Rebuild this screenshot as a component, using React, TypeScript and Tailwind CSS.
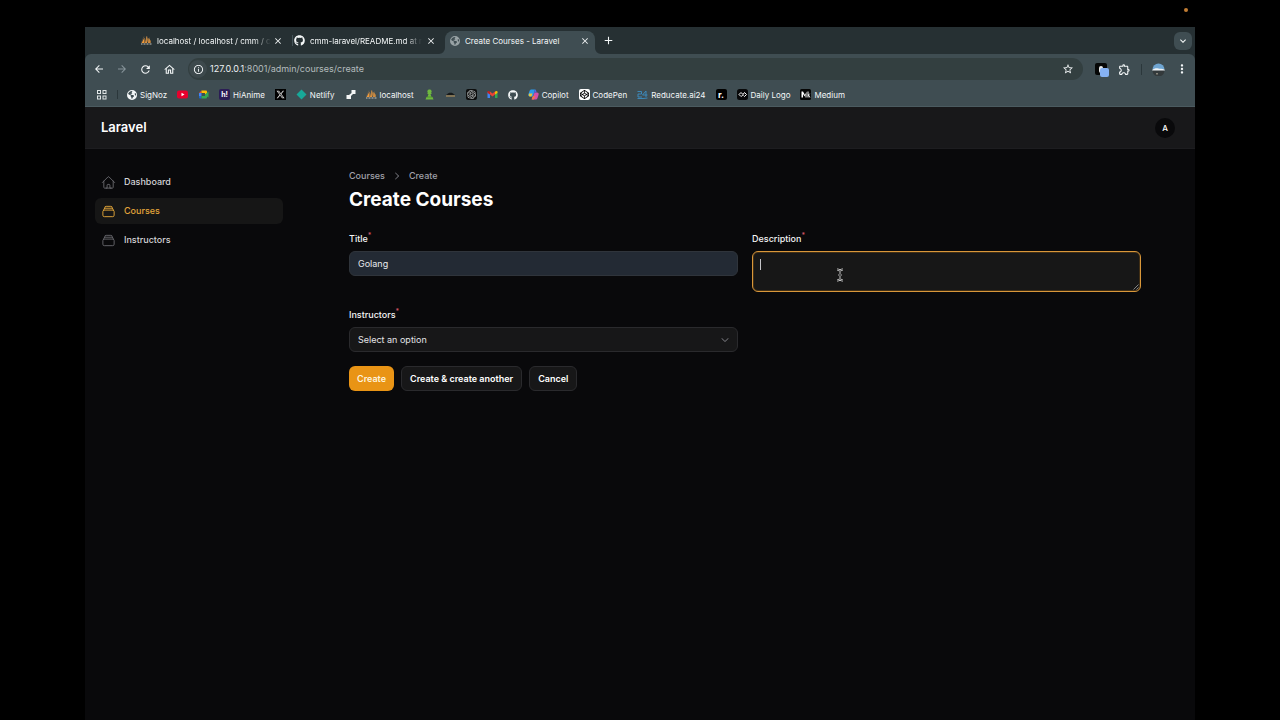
import type { ReactNode } from "react";
import {
  HiOutlineHome,
  HiOutlineRectangleStack,
  HiChevronRight,
  HiChevronDown,
} from "react-icons/hi2";
import {
  MdArrowBack,
  MdArrowForward,
  MdRefresh,
  MdOutlineHome,
  MdInfoOutline,
  MdStarBorder,
  MdOutlineExtension,
  MdClose,
  MdAdd,
  MdMoreVert,
  MdKeyboardArrowDown,
} from "react-icons/md";
import { FaGithub, FaXTwitter, FaCodepen, FaEarthAmericas } from "react-icons/fa6";
import { SiOpenai } from "react-icons/si";

const icon = "size-[11px] shrink-0";

function PhpMyAdmin() {
  return (
    <svg viewBox="0 0 22 20" className={icon} aria-hidden="true">
      <path d="M1 15 7 4v11zM8 15 11 1c3 4 3 10 1 14zM14 15l1-10c4 3 5 7 4 10z" fill="#f09a3a" />
      <path d="M6 2 1 14M12 1l-2 13M17 4l-1 11" stroke="#7c6a55" strokeWidth="1" />
      <path d="M0 17h22" stroke="#c8c6c0" strokeWidth="2" strokeDasharray="2 1" />
    </svg>
  );
}

function YouTube() {
  return (
    <svg viewBox="0 0 22 22" className={icon} aria-hidden="true">
      <rect x="0" y="3" width="22" height="16" rx="4" fill="#e6002d" />
      <path d="m9 7.500 6 3.500-6 3.500z" fill="#fff" />
    </svg>
  );
}

function Meet() {
  return (
    <svg viewBox="0 0 22 22" className={icon} aria-hidden="true">
      <path d="M2 8 7 3v5z" fill="#ea4335" />
      <path d="M7 3h9a2 2 0 0 1 2 2v4l-4 2V8H7z" fill="#fbbc04" />
      <path d="M2 8h5v7H2z" fill="#4285f4" />
      <path d="M2 15h5v4H4a2 2 0 0 1-2-2z" fill="#1967d2" />
      <path d="M7 14h7v-3l7-6v12l-3-2v2a2 2 0 0 1-2 2H7z" fill="#34a853" />
    </svg>
  );
}

function HiAnime() {
  return (
    <span className="flex size-[11px] shrink-0 items-center justify-center rounded-xs bg-[#2b1c55] text-[7px] font-bold leading-none text-white">
      h!
    </span>
  );
}

function XLogo() {
  return (
    <span className="flex size-[11px] shrink-0 items-center justify-center bg-black text-[#d6d6d6]">
      <FaXTwitter className="size-[9px]" />
    </span>
  );
}

function Netlify() {
  return (
    <svg viewBox="0 0 22 22" className={icon} aria-hidden="true">
      <path d="m11 1 10 10-10 10L1 11z" fill="#17a899" />
    </svg>
  );
}

function Steps() {
  return (
    <svg viewBox="0 0 22 22" className={icon} aria-hidden="true">
      <path d="M13 2h8v8h-5l-4 4v6H3v-8h5l5-4z" fill="#f4f6f6" />
    </svg>
  );
}

function Pawn() {
  return (
    <svg viewBox="0 0 22 22" className={icon} aria-hidden="true">
      <path d="M11 1a4 4 0 0 1 3 7h1v2h-2l2 6h2l2 5H3l2-5h2l2-6H7V8h1a4 4 0 0 1 3-7z" fill="#6fb83f" />
      <path d="M5 16h12" stroke="#4a8a2a" strokeWidth="1.500" />
    </svg>
  );
}

function Hat() {
  return (
    <svg viewBox="0 0 22 22" className={icon} aria-hidden="true">
      <path d="M4 11c2-5 12-5 14 0l3 1H1z" fill="#16191a" />
      <path d="M2 14h18" stroke="#c39b5a" strokeWidth="2" />
    </svg>
  );
}

function OpenAi() {
  return (
    <span className="flex size-[11px] shrink-0 items-center justify-center rounded-xs bg-[#0c0d0d] text-[#c9cccc]">
      <SiOpenai className="size-[9px]" />
    </span>
  );
}

function Gmail() {
  return (
    <svg viewBox="0 0 22 22" className={icon} aria-hidden="true">
      <path d="M1 6v11a1 1 0 0 0 1 1h4V9z" fill="#4285f4" />
      <path d="M21 6v11a1 1 0 0 1-1 1h-4V9z" fill="#34a853" />
      <path d="m6 5 5 4 5-4v6l-5 4-5-4z" fill="#ea4335" />
      <path d="M1 6c0-2 2-3 5-1v6L1 8z" fill="#c5221f" />
      <path d="M21 6c0-2-2-3-5-1v6l5-3z" fill="#fbbc04" />
    </svg>
  );
}

function Copilot() {
  return (
    <svg viewBox="0 0 22 22" className={icon} aria-hidden="true">
      <path d="M7 1h7l-4 14H4c-3 0-4-2-3-5l2-6c1-2 2-3 4-3z" fill="#2a9bea" />
      <path d="M2 9h7l-2 6H4c-3 0-3-3-2-6z" fill="#e8c338" />
      <path d="M13 7h5c3 0 4 2 3 5l-2 6c-1 2-2 3-4 3H8z" fill="#d44fa9" />
      <path d="M14 1c3 0 2 5 4 6h-5l-2 4z" fill="#5566e0" />
      <path d="m9 15-2 6h5l3-8z" fill="#f2744d" />
    </svg>
  );
}

function CodePen() {
  return (
    <span className="flex size-[11px] shrink-0 items-center justify-center rounded-xs bg-white text-black">
      <FaCodepen className="size-[9px]" />
    </span>
  );
}

function Reducate() {
  return (
    <svg viewBox="0 0 22 22" className={icon} aria-hidden="true">
      <path d="M1 5h8v5H2v6h8M18 16V4l-7 8h10M1 19h11l9-1" fill="none" stroke="#3c8fc4" strokeWidth="1.800" />
    </svg>
  );
}

function Roadmap() {
  return (
    <span className="flex size-[11px] shrink-0 items-center justify-center rounded-xs bg-black text-[9px] font-bold leading-none text-white">
      r.
    </span>
  );
}

function DailyLogo() {
  return (
    <svg viewBox="0 0 22 22" className={icon} aria-hidden="true">
      <rect width="22" height="22" rx="5" fill="#08090a" />
      <path d="m8 15-4-4 4-4 3 3M9 15l6-8 4 4-4 4-2-2" fill="none" stroke="#fff" strokeWidth="2" />
    </svg>
  );
}

function Medium() {
  return (
    <svg viewBox="0 0 22 22" className={icon} aria-hidden="true">
      <rect width="22" height="22" rx="3" fill="#050505" />
      <path d="M3 5h3l4 7 3-7v12h-2v-6l-2 4-3-5v7H3zM15 5h2v6l4-3-3 4 3 5h-2l-2-4v4h-2z" fill="#fff" />
    </svg>
  );
}

function AppsGrid() {
  return (
    <svg viewBox="0 0 20 20" className="size-[10px]" fill="none" stroke="#dfe5e6" strokeWidth="2" aria-hidden="true">
      <rect x="1" y="1" width="6" height="6" />
      <rect x="12" y="1" width="6" height="6" />
      <rect x="1" y="12" width="6" height="6" />
      <rect x="12" y="12" width="6" height="6" />
    </svg>
  );
}

const bookmarks: { name: string; label?: string; art: ReactNode }[] = [
  { name: "SigNoz", label: "SigNoz", art: <FaEarthAmericas className="size-[10px] shrink-0" /> },
  { name: "YouTube", art: <YouTube /> },
  { name: "Meet", art: <Meet /> },
  { name: "HiAnime", label: "HiAnime", art: <HiAnime /> },
  { name: "X", art: <XLogo /> },
  { name: "Netlify", label: "Netlify", art: <Netlify /> },
  { name: "Steps", art: <Steps /> },
  { name: "localhost", label: "localhost", art: <PhpMyAdmin /> },
  { name: "Chess", art: <Pawn /> },
  { name: "Hat", art: <Hat /> },
  { name: "ChatGPT", art: <OpenAi /> },
  { name: "Gmail", art: <Gmail /> },
  { name: "GitHub", art: <FaGithub className="size-[10px] shrink-0" /> },
  { name: "Copilot", label: "Copilot", art: <Copilot /> },
  { name: "CodePen", label: "CodePen", art: <CodePen /> },
  { name: "Reducate.ai24", label: "Reducate.ai24", art: <Reducate /> },
  { name: "Roadmap", art: <Roadmap /> },
  { name: "Daily Logo", label: "Daily Logo", art: <DailyLogo /> },
  { name: "Medium", label: "Medium", art: <Medium /> },
];

function Tab({ art, title, active }: { art: ReactNode; title: string; active?: boolean }) {
  return (
    <div
      className={
        active
          ? "relative flex h-[23px] w-[150px] items-center gap-[5px] rounded-t-lg bg-[#3f4d52] pr-[5px] pb-1 pl-[5px]"
          : "flex h-[23px] w-[152px] items-center gap-[5px] pr-[9px] pb-1 pl-[1px]"
      }
    >
      {active && (
        <>
          <svg viewBox="0 0 6 6" className="absolute bottom-0 -left-[6px] size-[6px]" aria-hidden="true">
            <path d="M6 0v6H0a6 6 0 0 0 6-6z" fill="#3f4d52" />
          </svg>
          <svg viewBox="0 0 6 6" className="absolute -right-[6px] bottom-0 size-[6px]" aria-hidden="true">
            <path d="M0 0v6h6a6 6 0 0 1-6-6z" fill="#3f4d52" />
          </svg>
        </>
      )}
      {art}
      <span className="min-w-0 flex-1 whitespace-nowrap">
        <span className={active ? "" : "mask-r-from-85%"}>{title}</span>
      </span>
      <button type="button" aria-label={`Close ${title}`} className="shrink-0">
        <MdClose className="size-[10px]" />
      </button>
    </div>
  );
}

function BrowserChrome() {
  return (
    <header className="bg-[#263033] text-[8px] text-[#f4f7f8]">
      <div className="flex h-[27px] items-end pl-[55px]">
        <Tab art={<PhpMyAdmin />} title="localhost / localhost / cmm / c" />
        <span className="mb-[8px] h-[11px] w-px bg-[#46545a]" />
        <Tab art={<FaGithub className={icon} />} title="cmm-laravel/README.md at r" />
        <Tab art={<FaEarthAmericas className="size-[10px] shrink-0 text-[#98a2a5]" />} title="Create Courses - Laravel" active />
        <button type="button" aria-label="New tab" className="mb-[7px] ml-[7px]">
          <MdAdd className="size-[13px]" />
        </button>
        <button
          type="button"
          aria-label="Search tabs"
          className="mr-[3px] mb-[4px] ml-auto flex size-[18px] items-center justify-center rounded-md bg-[#3f4d52]"
        >
          <MdKeyboardArrowDown className="size-[12px]" />
        </button>
      </div>
      <div className="rounded-t-md border-b border-[#4b5b60] bg-[#3f4d52]">
        <div className="flex h-[30px] items-center pr-[6px] pl-[8px]">
          <div className="flex items-center gap-[11px] pr-[12px]">
            <button type="button" aria-label="Back"><MdArrowBack className="size-[12px]" /></button>
            <button type="button" aria-label="Forward" className="text-[#87949a]"><MdArrowForward className="size-[12px]" /></button>
            <button type="button" aria-label="Reload"><MdRefresh className="size-[13px]" /></button>
            <button type="button" aria-label="Home"><MdOutlineHome className="size-[13px]" /></button>
          </div>
          <div className="flex h-[22px] flex-1 items-center rounded-full bg-[#333f40] pr-[9px] pl-px">
            <span className="flex size-[18px] items-center justify-center rounded-full bg-[#3d494c]">
              <MdInfoOutline className="size-[11px]" />
            </span>
            <span className="ml-[3px] flex-1 text-[9px] text-[#b3bcbe]">
              <span className="text-[#eef1f2]">127.0.0.1</span>:8001/admin/courses/create
            </span>
            <button type="button" aria-label="Bookmark this page"><MdStarBorder className="size-[12px]" /></button>
          </div>
          <div className="flex items-center pl-[12px]">
            <button type="button" aria-label="Extension" className="relative flex size-[12px] items-center justify-center rounded-xs bg-[#060707]">
              <span className="h-[7px] w-[4px] rounded-xs bg-[#e9e9e9]" />
              <span className="absolute top-[5px] left-[5px] size-[9px] rounded-xs bg-[#86b2f3]" />
            </button>
            <button type="button" aria-label="Extensions" className="ml-[11px]"><MdOutlineExtension className="size-[13px]" /></button>
            <span className="mx-[10px] h-[11px] w-px bg-[#2b373b]" />
            <button type="button" aria-label="Profile">
              <svg viewBox="0 0 26 26" className="size-[13px]" aria-hidden="true">
                <path d="M1 13a12 12 0 0 1 24 0z" fill="#6fa5d2" />
                <path d="M1 13c6-3 8-3 12-2s6 0 12 2v3H1z" fill="#eef3f6" />
                <path d="M1 15h24a12 12 0 0 1-24 0z" fill="#33393b" />
                <path d="M9 20h2v3H9z" fill="#d7cdb8" />
              </svg>
            </button>
            <button type="button" aria-label="Menu" className="ml-[10px]"><MdMoreVert className="size-[14px]" /></button>
          </div>
        </div>
        <nav aria-label="Bookmarks" className="flex h-[22px] items-center gap-[10px] pb-px pl-[12px]">
          <button type="button" aria-label="Apps"><AppsGrid /></button>
          <span className="-mr-px h-[9px] w-px bg-[#2b373b]" />
          {bookmarks.map((b) => (
            <a key={b.name} href="#" aria-label={b.name} className="flex shrink-0 items-center gap-[3px] whitespace-nowrap">
              {b.art}
              {b.label}
            </a>
          ))}
        </nav>
      </div>
    </header>
  );
}

const navItems = [
  { label: "Dashboard", Icon: HiOutlineHome, active: false },
  { label: "Courses", Icon: HiOutlineRectangleStack, active: true },
  { label: "Instructors", Icon: HiOutlineRectangleStack, active: false },
];

function Sidebar() {
  return (
    <aside className="w-[198px] shrink-0 pt-[20px] pl-[10px]">
      <nav aria-label="Main" className="flex flex-col gap-[3px]">
        {navItems.map(({ label, Icon, active }) => (
          <a
            key={label}
            href="#"
            aria-current={active ? "page" : undefined}
            className={
              active
                ? "flex h-[26px] items-center gap-[8px] rounded-md bg-[#161616] pl-[6px] text-[#e2a53a]"
                : "flex h-[26px] items-center gap-[8px] rounded-md pl-[6px] text-[#d4d4d8]"
            }
          >
            <Icon className={active ? "size-[15px]" : "size-[15px] text-[#66666c]"} />
            {label}
          </a>
        ))}
      </nav>
    </aside>
  );
}

function FieldLabel({ id, children }: { id: string; children: ReactNode }) {
  return (
    <label htmlFor={id} className="flex h-[14px] items-center leading-[14px] text-[#f4f4f5]">
      {children}
      <sup className="text-[7px] leading-none text-[#d9566a]">*</sup>
    </label>
  );
}

function CreateForm() {
  return (
    <form className="mt-[20px]">
      <div className="grid grid-cols-2 gap-x-[14px] gap-y-[16px]">
        <div className="flex flex-col gap-[5px]">
          <FieldLabel id="title">Title</FieldLabel>
          <input
            id="title"
            type="text"
            defaultValue="Golang"
            className="h-[25px] w-full rounded-md border border-[#2f343b] bg-[#232a34] px-[8px] font-normal text-[#e7e9ec] outline-none"
          />
        </div>
        <div className="flex flex-col gap-[5px]">
          <FieldLabel id="description">Description</FieldLabel>
          <div className="relative">
            <textarea
              id="description"
              className="block h-[41px] w-full resize-none rounded-md border border-[#d9973a] bg-[#171717] px-[8px] py-[5px] font-normal text-white ring-1 ring-[#6b4713]/50 outline-none ring-inset"
            />
            <span className="absolute top-[8px] left-[8px] h-[11px] w-px bg-[#c4c4c7]" />
            <svg viewBox="0 0 6 6" className="absolute right-[2px] bottom-[2px] size-[6px]" stroke="#a1a1a1" strokeWidth="0.800" aria-hidden="true">
              <path d="M0.500 5.500l5-5M3.500 5.500l2-2" />
            </svg>
            <svg viewBox="0 0 8 14" className="absolute top-[17px] left-[84px] h-[14px] w-[8px]" fill="none" aria-hidden="true">
              <path d="M1 1.500c2 0 3 .5 3 2v7c0 1.500-1 2-3 2M7 1.500c-2 0-3 .5-3 2v7c0 1.500 1 2 3 2M2.500 7h3" stroke="#d6d6d6" strokeWidth="2" />
              <path d="M1 1.500c2 0 3 .5 3 2v7c0 1.500-1 2-3 2M7 1.500c-2 0-3 .5-3 2v7c0 1.500 1 2 3 2M2.500 7h3" stroke="#222" strokeWidth="0.700" />
            </svg>
          </div>
        </div>
        <div className="flex flex-col gap-[5px]">
          <FieldLabel id="instructors">Instructors</FieldLabel>
          <div className="relative">
            <select
              id="instructors"
              className="block h-[25px] w-full appearance-none rounded-md border border-[#2a2a2d] bg-[#171718] px-[8px] font-normal text-[#e4e4e7] outline-none"
            >
              <option>Select an option</option>
            </select>
            <HiChevronDown className="pointer-events-none absolute top-[8px] right-[8px] size-[10px] text-[#85858b]" />
          </div>
        </div>
      </div>
      <div className="mt-[14px] flex gap-[7px] font-semibold text-white">
        <button type="submit" className="h-[25px] rounded-md bg-[#e99415] px-[8px] text-[#fdf3dc]">Create</button>
        <button type="button" className="h-[25px] rounded-md border border-[#2a2a2d] bg-[#171718] px-[8px]">Create &amp; create another</button>
        <button type="button" className="h-[25px] rounded-md border border-[#2a2a2d] bg-[#171718] px-[8px]">Cancel</button>
      </div>
    </form>
  );
}

export default function App() {
  return (
    <div className="min-h-screen bg-black px-[85px] font-[Inter,sans-serif]">
      <div className="flex h-[27px] justify-end pt-[8px] pr-[7px]">
        <span className="size-[4px] rounded-full bg-[#c17d33]" />
      </div>
      <div className="flex min-h-[calc(100vh-27px)] flex-col bg-[#09090b]">
        <BrowserChrome />
        <div className="flex h-[42px] items-center justify-between border-b border-[#1d1d20] bg-[#18181a] pr-[20px] pl-[16px]">
          <span className="text-[13px] font-semibold text-white">Laravel</span>
          <button type="button" aria-label="Account" className="size-[20px] rounded-full bg-[#09090b] text-[8px] font-medium text-white">A</button>
        </div>
        <div className="flex flex-1 text-[9px] font-medium">
          <Sidebar />
          <main className="min-w-0 flex-1 pt-[20px] pr-[54px] pl-[66px]">
            <nav aria-label="Breadcrumb" className="flex h-[14px] items-center gap-[7px] text-[#a1a1aa]">
              <a href="#">Courses</a>
              <HiChevronRight className="size-[10px]" />
              <a href="#">Create</a>
            </nav>
            <h1 className="mt-[5px] text-[19px] leading-[24px] font-bold text-white">Create Courses</h1>
            <CreateForm />
          </main>
        </div>
      </div>
    </div>
  );
}
